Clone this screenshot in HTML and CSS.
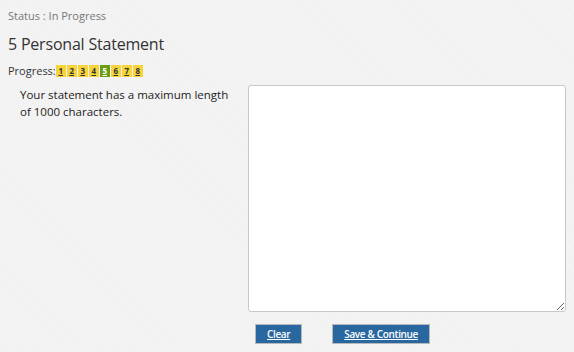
FILE: index.html
```html
<!DOCTYPE html>
<html lang="en">
<head>
    <meta charset="UTF-8">
    <meta name="viewport" content="width=device-width, initial-scale=1.0">
    <title>Personal Statement</title>
    <link rel="stylesheet" href="styles.css">
</head>
<body>
    <div id="page">
        <p class="status">Status : In Progress</p>
        <h2 class="title">5 Personal Statement</h2>

        <div class="progress">
            <span class="progress-label">Progress:</span>
            <a href="#" class="step">1</a>
            <a href="#" class="step">2</a>
            <a href="#" class="step">3</a>
            <a href="#" class="step">4</a>
            <a href="#" class="step current">5</a>
            <a href="#" class="step">6</a>
            <a href="#" class="step">7</a>
            <a href="#" class="step">8</a>
        </div>

        <div class="statement">
            <p class="hint">Your statement has a maximum length of 1000 characters.</p>
            <textarea id="statementText" maxlength="1000"></textarea>
        </div>

        <div class="actions">
            <button class="btn">Clear</button>
            <button class="btn">Save &amp; Continue</button>
        </div>
    </div>
</body>
</html>
```

FILE: styles.css
```css
body {
    font-family: "Open Sans", Arial, sans-serif;
    margin: 0;
    padding: 0;
    background-color: #f3f3f3;
    background-image: repeating-linear-gradient(45deg, #f4f4f4 0, #f4f4f4 1px, #f1f1f1 1px, #f1f1f1 2px);
    color: #333;
}
#page {
    padding: 8px 8px 0 8px;
}
.status {
    margin: 0;
    font-size: 11px;
    line-height: 16px;
    color: #777;
}
.title {
    margin: 9px 0 0 0;
    font-size: 16px;
    font-weight: normal;
    letter-spacing: -0.2px;
    line-height: 22px;
    color: #333;
}
.progress {
    display: flex;
    align-items: center;
    margin-top: 9px;
    height: 13px;
}
.progress-label {
    font-size: 11px;
    color: #333;
}
.step {
    display: block;
    width: 10px;
    height: 12px;
    margin-right: 1px;
    background-color: #f7d43c;
    color: #333;
    font-size: 8px;
    font-weight: bold;
    line-height: 12px;
    text-align: center;
}
.step.current {
    background-color: #6b9c16;
    color: #fff;
}
.statement {
    display: flex;
    margin-top: 8px;
}
.hint {
    width: 216px;
    margin: 1px 12px 0 0;
    padding-left: 12px;
    font-size: 11.5px;
    line-height: 17px;
    color: #222;
}
textarea {
    width: 318px;
    height: 227px;
    box-sizing: border-box;
    border: 1px solid #c8c8c8;
    border-radius: 3px;
    background-color: #fff;
    resize: both;
    font-family: "Open Sans", Arial, sans-serif;
}
.actions {
    display: flex;
    gap: 30px;
    margin-top: 12px;
    padding-left: 247px;
}
.btn {
    background-color: #2867a0;
    color: #fff;
    border: 1px solid #b8b8b8;
    padding: 0 11px;
    height: 20px;
    font-family: "Open Sans", Arial, sans-serif;
    font-size: 10px;
    font-weight: 600;
    letter-spacing: -0.35px;
    text-decoration: underline;
    cursor: pointer;
}
```
